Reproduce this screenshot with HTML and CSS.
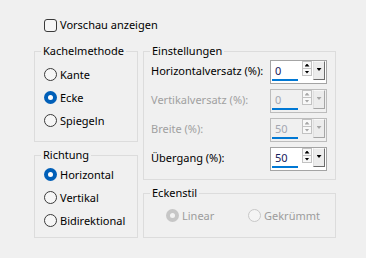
FILE: index.html
```html
<!DOCTYPE html>
<html lang="de">
<head>
  <meta charset="UTF-8" />
  <title>Kacheln</title>
  <link rel="stylesheet" href="styles.css">
</head>
<body>
  <div class="dialog">
    <div class="check-row"><span class="checkbox"></span>Vorschau anzeigen</div>

    <div class="columns">
      <div class="col">
        <fieldset class="group">
          <legend>Kachelmethode</legend>
          <div class="group-body method">
            <div class="radio"><span class="dot"></span>Kante</div>
            <div class="radio"><span class="dot on"></span>Ecke</div>
            <div class="radio"><span class="dot"></span>Spiegeln</div>
          </div>
        </fieldset>
        <fieldset class="group">
          <legend>Richtung</legend>
          <div class="group-body direction">
            <div class="radio"><span class="dot on"></span>Horizontal</div>
            <div class="radio"><span class="dot"></span>Vertikal</div>
            <div class="radio"><span class="dot"></span>Bidirektional</div>
          </div>
        </fieldset>
      </div>

      <div class="col">
        <fieldset class="group">
          <legend>Einstellungen</legend>
          <div class="group-body settings">
            <div class="field">
              <span class="field-label">Horizontalversatz (%):</span>
              <div class="spin">
                <div class="spin-value"><div class="spin-text">0</div><div class="spin-bar"></div></div>
                <div class="spin-arrows"><span class="spin-up"></span><span class="spin-down"></span></div>
                <span class="spin-drop"></span>
              </div>
            </div>
            <div class="field disabled">
              <span class="field-label">Vertikalversatz (%):</span>
              <div class="spin">
                <div class="spin-value"><div class="spin-text">0</div><div class="spin-bar"></div></div>
                <div class="spin-arrows"><span class="spin-up"></span><span class="spin-down"></span></div>
                <span class="spin-drop"></span>
              </div>
            </div>
            <div class="field disabled">
              <span class="field-label">Breite (%):</span>
              <div class="spin">
                <div class="spin-value"><div class="spin-text">50</div><div class="spin-bar"></div></div>
                <div class="spin-arrows"><span class="spin-up"></span><span class="spin-down"></span></div>
                <span class="spin-drop"></span>
              </div>
            </div>
            <div class="field">
              <span class="field-label">Übergang (%):</span>
              <div class="spin">
                <div class="spin-value"><div class="spin-text">50</div><div class="spin-bar"></div></div>
                <div class="spin-arrows"><span class="spin-up"></span><span class="spin-down"></span></div>
                <span class="spin-drop"></span>
              </div>
            </div>
          </div>
        </fieldset>
        <fieldset class="group">
          <legend>Eckenstil</legend>
          <div class="group-body corner">
            <div class="radio disabled"><span class="dot on"></span>Linear</div>
            <div class="radio disabled"><span class="dot"></span>Gekrümmt</div>
          </div>
        </fieldset>
      </div>
    </div>
  </div>
</body>
</html>
```

FILE: styles.css
```css
body {
  margin: 0;
  background: #f0f0f0;
  color: #000;
  font-family: "Noto Sans", "Open Sans", sans-serif;
  font-size: 11px;
  line-height: 16px;
}

.dialog {
  width: 366px;
  height: 258px;
  padding-top: 17px;
  box-sizing: border-box;
}

.check-row {
  display: flex;
  align-items: flex-start;
  margin: 0 0 10px 44px;
}

.checkbox {
  width: 13px;
  height: 13px;
  margin: 2px 3px 0 0;
  box-sizing: border-box;
  border: 1px solid #3a3a3a;
  border-radius: 3px;
  background: #f6f6f6;
}

.columns {
  display: grid;
  grid-template-columns: 104px 193px;
  column-gap: 5px;
  padding-left: 34px;
}

.col {
  display: flex;
  flex-direction: column;
  gap: 5px;
}

.group {
  margin: 0;
  padding: 0;
  min-width: 0;
  border: 1px solid #dcdcdc;
}

.group legend {
  margin-left: 6px;
  padding: 0 2px;
  line-height: 16px;
}

.method {
  padding: 4px 0 9px 9px;
}

.direction {
  padding: 0 0 5px 9px;
}

.radio {
  display: flex;
  align-items: center;
  height: 23px;
}

.dot {
  position: relative;
  width: 13px;
  height: 13px;
  margin-right: 3px;
  box-sizing: border-box;
  border: 1px solid #3a3a3a;
  border-radius: 50%;
  background: #f6f6f6;
}

.dot.on {
  border: none;
  background: #005fb8;
}

.dot.on::after {
  content: "";
  position: absolute;
  left: 4px;
  top: 4px;
  width: 5px;
  height: 5px;
  border-radius: 50%;
  background: #fff;
}

.radio.disabled {
  color: #9c9c9c;
}

.radio.disabled .dot {
  border-color: #c8c8c8;
  background: #f4f4f4;
}

.radio.disabled .dot.on {
  background: #c6c6c6;
}

.radio.disabled .dot.on::after {
  background: #f2f2f2;
}

.settings {
  display: flex;
  flex-direction: column;
  gap: 5px;
  padding: 1px 8px 8px 7px;
}

.field {
  display: flex;
  justify-content: space-between;
  height: 24px;
}

.field-label {
  margin-top: 3px;
}

.field.disabled .field-label {
  color: #a0a0a0;
}

.spin {
  display: flex;
  align-items: flex-start;
  width: 57px;
  height: 24px;
  box-sizing: border-box;
  border: 1px solid #a4a4a4;
  background: #fff;
}

.spin-value {
  width: 31px;
  padding: 2px 0 0 1px;
  box-sizing: border-box;
}

.spin-text {
  padding-left: 3px;
  color: #16205a;
}

.spin-bar {
  width: 26px;
  height: 2px;
  background: #0078d4;
}

.spin-arrows {
  display: flex;
  flex-direction: column;
  width: 10px;
}

.spin-up,
.spin-down {
  display: flex;
  align-items: center;
  justify-content: center;
  box-sizing: border-box;
  border: 1px solid #c2c2c2;
  background: #f8f8f8;
}

.spin-up {
  height: 8px;
}

.spin-down {
  height: 7px;
  border-top: none;
}

.spin-up::after,
.spin-down::after,
.spin-drop::after {
  content: "";
  width: 5px;
  height: 3px;
  background: #000;
}

.spin-up::after {
  clip-path: polygon(50% 0, 100% 100%, 0 100%);
}

.spin-down::after,
.spin-drop::after {
  clip-path: polygon(0 0, 100% 0, 50% 100%);
}

.spin-drop {
  display: flex;
  justify-content: center;
  width: 12px;
  height: 19px;
  margin-left: 1px;
  padding-top: 6px;
  box-sizing: border-box;
  border: 1px solid;
  border-color: #f8f8f8 #6c6c6c #6c6c6c #e0e0e0;
  background: #ececec;
}

.field.disabled .spin {
  border-color: #bcbcbc;
  background: #f0f0f0;
}

.field.disabled .spin-text {
  color: #a3a6b0;
}

.field.disabled .spin-up::after,
.field.disabled .spin-down::after,
.field.disabled .spin-drop::after {
  background: #a6a6a6;
}

.field.disabled .spin-drop {
  border-color: #f8f8f8 #a6a6a6 #a6a6a6 #e0e0e0;
}

.corner {
  display: grid;
  grid-template-columns: 82px auto;
  padding: 3px 0 10px 22px;
}
```
